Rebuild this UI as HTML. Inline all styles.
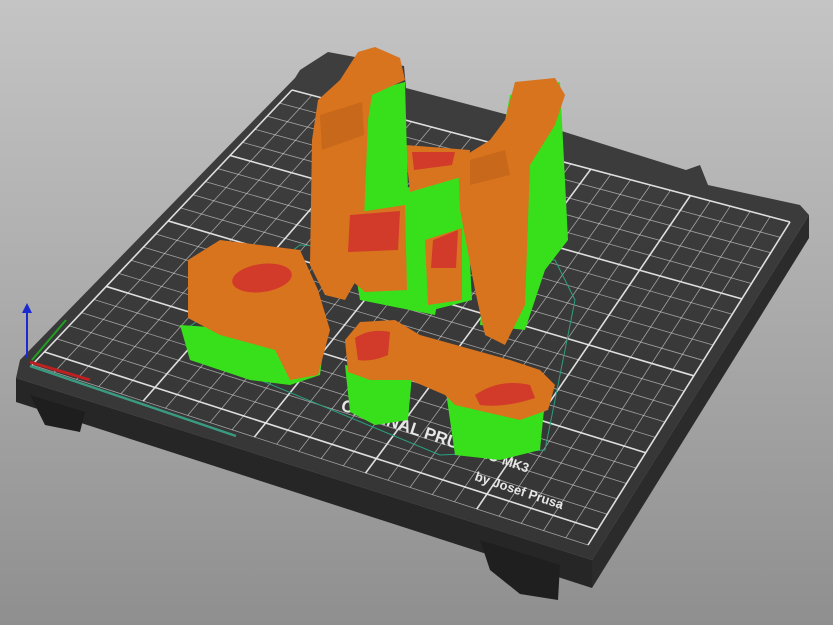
<!DOCTYPE html>
<html><head><meta charset="utf-8"><style>
html,body{margin:0;padding:0;width:833px;height:625px;overflow:hidden}
body{background:linear-gradient(#c4c4c4 0%,#b0b0b0 40%,#8f8f8f 100%)}
svg{position:absolute;left:0;top:0}
</style></head><body>
<svg id="s" width="833" height="625" viewBox="0 0 833 625">
<defs>
<linearGradient id="bed" x1="0" y1="0" x2="0" y2="1"><stop offset="0" stop-color="#3e3e3e"/><stop offset="1" stop-color="#353535"/></linearGradient>
</defs>
<polygon points="16,378 592,560 592,588 16,402" fill="#262626"/>
<polygon points="592,560 809,215 809,238 592,588" fill="#2b2b2b"/>
<polygon points="30,395 85,412 80,432 45,425" fill="#1e1e1e"/>
<polygon points="480,540 560,565 558,600 520,594 490,570" fill="#1f1f1f"/>
<polygon points="328,52 404,66 406,88 520,118 686,170 700,165 708,185 800,205 809,215 592,560 16,378 20,360 295,78 300,70" fill="url(#bed)"/>
<g id="grid" stroke="#e8e8e8" fill="none"></g>
<polygon points="185,330 300,245 555,260 575,300 545,450 440,455 200,355" fill="none" stroke="#2aa080" stroke-width="1"/>
<text x="0" y="0" transform="translate(340,410) rotate(18.5)" fill="#e6e6e6" font-family="Liberation Sans,sans-serif" font-weight="bold" font-size="17">ORIGINAL PRUSA i3 <tspan font-size="13">MK3</tspan></text>
<text x="0" y="0" transform="translate(474,480) rotate(18.5)" fill="#e6e6e6" font-family="Liberation Sans,sans-serif" font-weight="bold" font-size="13">by Josef Prusa</text>
<line x1="27" y1="358" x2="27" y2="310" stroke="#1a2ad0" stroke-width="2"/>
<polygon points="22,313 27,303 32,313" fill="#1a2ad0"/>
<line x1="32" y1="360" x2="66" y2="320" stroke="#20a020" stroke-width="2"/>
<line x1="30" y1="362" x2="90" y2="380" stroke="#c02020" stroke-width="3"/>
<line x1="30" y1="366" x2="236" y2="436" stroke="#3a9a80" stroke-width="2.5"/>

<!-- middle piece back -->
<polygon points="398,190 465,172 472,300 425,312 400,295" fill="#38e01c"/>
<polygon points="355,270 440,290 435,315 360,300" fill="#38e01c"/>
<polygon points="405,145 470,150 468,175 410,192" fill="#d8731e"/>
<polygon points="412,152 455,152 452,165 414,170" fill="#d23a2a"/>
<!-- left tall tower -->
<polygon points="355,95 405,82 410,265 370,295 355,270" fill="#38e01c"/>
<polygon points="318,100 340,80 358,52 375,47 400,58 405,80 372,95 368,120 362,270 345,300 325,295 310,265 312,140" fill="#d8731e"/>
<polygon points="320,115 362,102 364,135 322,150" fill="#c8681a"/>
<!-- middle piece front -->
<polygon points="340,215 405,205 407,290 365,292 345,275" fill="#d8731e"/>
<polygon points="350,215 400,211 398,250 348,252" fill="#d23a2a"/>
<polygon points="425,240 462,228 462,300 428,305" fill="#d8731e"/>
<polygon points="433,240 458,230 456,268 431,268" fill="#d23a2a"/>
<!-- right tall tower -->
<polygon points="510,95 560,82 568,240 545,270 525,330 480,325 490,200" fill="#38e01c"/>
<polygon points="515,82 555,78 565,95 555,125 530,165 525,305 505,345 485,335 475,290 460,210 458,160 490,140 505,120" fill="#d8731e"/>
<polygon points="470,160 505,150 510,175 470,185" fill="#c8681a"/>
<!-- left block -->
<polygon points="180,325 325,335 320,375 290,385 250,380 190,360" fill="#38e01c"/>
<polygon points="188,260 220,240 300,250 318,290 330,330 318,375 290,380 275,350 220,335 188,318" fill="#d8731e"/>
<ellipse cx="262" cy="278" rx="30" ry="14" transform="rotate(-8 262 278)" fill="#d23a2a"/>
<!-- bottom bar -->
<polygon points="345,365 412,375 408,420 375,425 350,412" fill="#38e01c"/>
<polygon points="446,392 545,400 540,450 500,460 455,455" fill="#38e01c"/>
<polygon points="345,340 360,322 395,320 420,335 510,360 540,370 555,385 548,410 520,420 455,405 445,395 410,380 370,380 348,372" fill="#d8731e"/>
<path d="M355,338 Q370,328 390,332 L388,355 Q372,362 358,360 Z" fill="#d23a2a"/>
<path d="M475,395 Q500,378 530,385 L535,398 Q505,408 480,405 Z" fill="#d23a2a"/>
</svg>
<script>
var g=document.getElementById('grid');
var TL=[292,90],TR=[790,222],BR=[588,545],BL=[32,365];
function L(a,b,t){return [a[0]+(b[0]-a[0])*t,a[1]+(b[1]-a[1])*t];}
var N=25,M=21;
for(var i=0;i<=N;i++){var t=i/N,p=L(TL,TR,t),q=L(BL,BR,t);
var l=document.createElementNS('http://www.w3.org/2000/svg','line');
l.setAttribute('x1',p[0]);l.setAttribute('y1',p[1]);l.setAttribute('x2',q[0]);l.setAttribute('y2',q[1]);
l.setAttribute('stroke-width',i%5==0?1.6:0.8);l.setAttribute('stroke-opacity',i%5==0?0.95:0.6);g.appendChild(l);}
for(var j=0;j<=M;j++){var t=j/M,p=L(TL,BL,t),q=L(TR,BR,t);
var l=document.createElementNS('http://www.w3.org/2000/svg','line');
l.setAttribute('x1',p[0]);l.setAttribute('y1',p[1]);l.setAttribute('x2',q[0]);l.setAttribute('y2',q[1]);
l.setAttribute('stroke-width',j%5==0?1.6:0.8);l.setAttribute('stroke-opacity',j%5==0?0.95:0.6);g.appendChild(l);}
</script>
</body></html>
